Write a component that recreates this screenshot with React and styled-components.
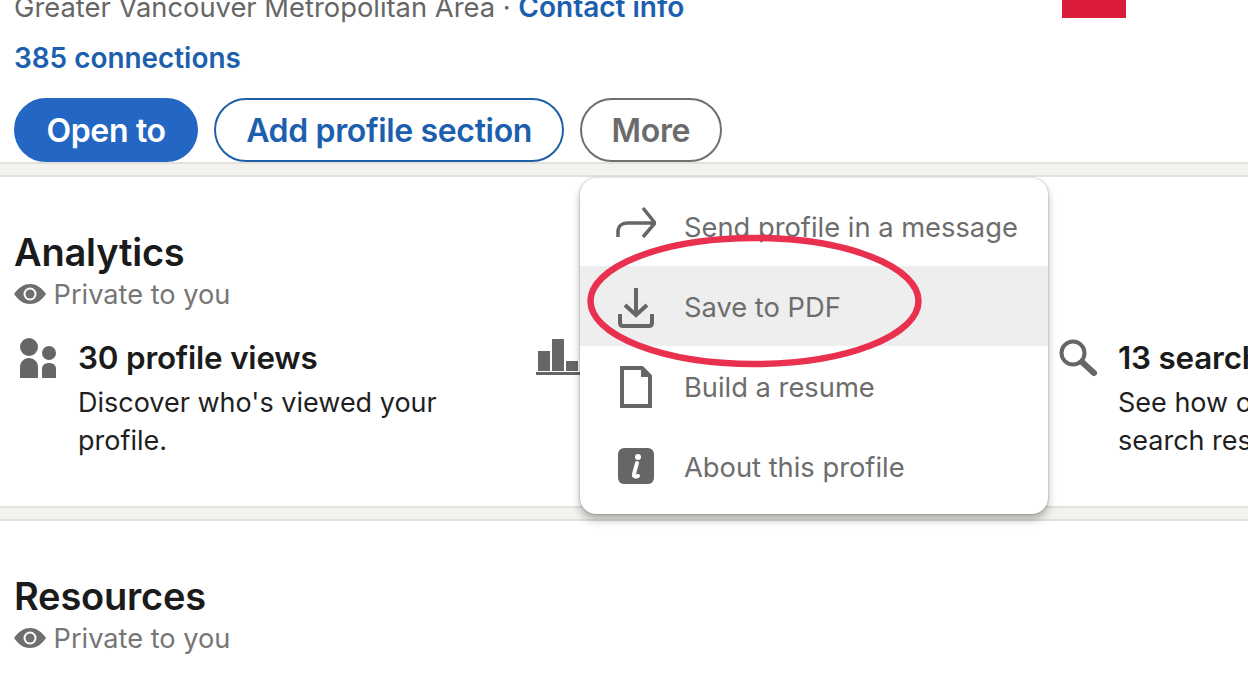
import React from 'react'
import styled, { createGlobalStyle } from 'styled-components'

const Global = createGlobalStyle`
  html, body { margin: 0; padding: 0; background: #fff; }
  * { box-sizing: border-box; }
`

const Page = styled.div`
  width: 1248px;
  height: 676px;
  overflow: hidden;
  background: #fff;
  font-family: Inter, "Liberation Sans", sans-serif;
  -webkit-font-smoothing: antialiased;
`

const Top = styled.header`
  padding: 0 14px;
  margin-top: -12px;
  position: relative;
`

const Flag = styled.div`
  position: absolute;
  top: 1px;
  left: 1062px;
  width: 64px;
  height: 29px;
  background: #dc1d3a;
`

const Location = styled.div`
  font-size: 27.35px;
  line-height: 38px;
  color: #666;
`

const BlueLink = styled.a`
  font-size: 28px;
  color: #1c5fae;
  font-weight: 600;
`

const Connections = styled(BlueLink)`
  display: block;
  margin-top: 12px;
  font-size: 27.9px;
  line-height: 38px;
`

const Actions = styled.div`
  display: flex;
  gap: 16px;
  margin-top: 21px;
`

const Pill = styled.button`
  height: 64px;
  padding: 2px ${p => p.$pad}px 0;
  border-radius: 32px;
  font: 600 32px/1 Inter, "Liberation Sans", sans-serif;
  letter-spacing: -0.35px;
  white-space: nowrap;
  background: ${p => (p.$kind === 'solid' ? '#2466c4' : '#fff')};
  color: ${p => (p.$kind === 'solid' ? '#fff' : p.$kind === 'blue' ? '#1c5fae' : '#6b6b6b')};
  border: 2px solid ${p => (p.$kind === 'solid' ? '#2466c4' : p.$kind === 'blue' ? '#1f5fa6' : '#6f6f6f')};
`

const MoreWrap = styled.div`
  position: relative;
`

const Band = styled.div`
  height: 15px;
  background: #f3f2ef;
  border-top: 2px solid #e2e1de;
  border-bottom: 2px solid #e2e1de;
`

const Section = styled.section`
  padding: ${p => p.$top}px 14px 0;
  height: ${p => p.$height}px;
`

const Heading = styled.h2`
  margin: 0;
  font-size: 38px;
  line-height: 44px;
  font-weight: 600;
  letter-spacing: -0.2px;
  color: #1b1b1b;
`

const Private = styled.div`
  display: flex;
  align-items: center;
  gap: 7.6px;
  height: 40px;
  font-size: 27.2px;
  color: #767676;
`

const Cards = styled.div`
  display: grid;
  grid-template-columns: repeat(3, 522px);
  margin-top: 24px;
`

const Card = styled.div`
  display: flex;
  align-items: flex-start;
`

const IconSlot = styled.div`
  flex: 0 0 ${p => p.$w}px;
  height: 44px;
  padding-left: ${p => p.$left}px;
  color: #666;
`

const CardText = styled.div`
  width: 400px;
  flex: none;
`

const CardTitle = styled.div`
  font-size: 31.4px;
  line-height: 40px;
  font-weight: 600;
  letter-spacing: -0.2px;
  color: #1b1b1b;
  white-space: nowrap;
`

const CardBody = styled.div`
  margin-top: 6px;
  font-size: 27px;
  line-height: 38px;
  color: #1f1f1f;
`

const Menu = styled.div`
  position: absolute;
  top: 80px;
  left: 0;
  z-index: 5;
  width: 468px;
  padding: 8px 0;
  background: #fff;
  border-radius: 16px;
  box-shadow: 0 0 2px rgba(0, 0, 0, 0.35), 0 6px 8px rgba(0, 0, 0, 0.28);
`

const MenuItem = styled.div`
  display: flex;
  align-items: center;
  gap: 28px;
  height: 80px;
  padding-left: 36px;
  font-size: 27.3px;
  color: #6d6d6d;
  white-space: nowrap;
  background: ${p => (p.$active ? '#eeeeee' : 'transparent')};
`

const MenuLabel = styled.span`
  padding-top: 2px;
`

const MenuIcon = styled.svg`
  width: 40px;
  height: 44px;
  flex: none;
  color: #666;
`

const Scribble = styled.svg`
  position: absolute;
  left: 6px;
  top: 56px;
  pointer-events: none;
`

const EyeIcon = () => (
  <svg width="32" height="20" viewBox="0 0 32 20">
    <path d="M0 10C5 3 10 0 16 0s11 3 16 10c-5 7-10 10-16 10S5 17 0 10z" fill="#6f6f6f" />
    <circle cx="16" cy="10" r="6.5" fill="#fff" />
    <circle cx="16" cy="10" r="4.5" fill="#6f6f6f" />
  </svg>
)

const PeopleIcon = () => (
  <svg width="38" height="42" viewBox="0 0 38 42" fill="currentColor">
    <circle cx="9" cy="9" r="9" />
    <circle cx="29" cy="15" r="7" />
    <path d="M0 40V29c0-5 4-9 9-9s9 4 9 9v11z" />
    <path d="M22 40V31c0-4 3-6 7-6s7 2 7 6v9z" />
  </svg>
)

const ChartIcon = () => (
  <svg width="44" height="44" viewBox="0 0 44 44" fill="currentColor">
    <rect x="2" y="13" width="12" height="20" />
    <rect x="16" y="1" width="12" height="32" />
    <rect x="30" y="23" width="12" height="10" />
    <rect x="0" y="34" width="44" height="3" />
  </svg>
)

const SearchIcon = () => (
  <svg width="40" height="40" viewBox="0 0 40 40" fill="none" stroke="currentColor">
    <circle cx="14" cy="15" r="11.5" strokeWidth="4" />
    <path d="M23 24l12 11" strokeWidth="6" strokeLinecap="round" />
  </svg>
)

const ShareIcon = () => (
  <MenuIcon viewBox="0 0 40 44" fill="none" stroke="currentColor" strokeWidth="3.5">
    <path d="M2 33v-5c0-6 4-9 9-9h27" />
    <path d="M27 4l12 15-12 14" />
  </MenuIcon>
)

const SaveIcon = () => (
  <MenuIcon viewBox="0 0 40 44" fill="none" stroke="currentColor" strokeWidth="4">
    <path d="M20 4v27" />
    <path d="M9 21l11 10 11-10" />
    <path d="M4 30v9c0 2 1 3 3 3h26c2 0 3-1 3-3v-9" />
  </MenuIcon>
)

const DocIcon = () => (
  <MenuIcon viewBox="0 0 40 44" fill="none" stroke="currentColor" strokeWidth="4">
    <path d="M6 4h20l8 8v30H6z" />
    <path d="M25 3h2l8 9v1h-10z" fill="currentColor" stroke="none" />
  </MenuIcon>
)

const InfoIcon = () => (
  <MenuIcon viewBox="0 0 40 44">
    <rect x="2" y="4" width="36" height="36" rx="6" fill="currentColor" />
    <circle cx="22" cy="13" r="3" fill="#fff" />
    <path d="M21 19l-3 11c-.5 2 1 3 4 2" fill="none" stroke="#fff" strokeWidth="4" strokeLinecap="round" />
  </MenuIcon>
)

const menuItems = [
  { label: 'Send profile in a message', Icon: ShareIcon },
  { label: 'Save to PDF', Icon: SaveIcon, active: true },
  { label: 'Build a resume', Icon: DocIcon },
  { label: 'About this profile', Icon: InfoIcon },
]

export default function App() {
  return (
    <Page>
      <Global />
      <Top>
        <Flag />
        <Location>
          Greater Vancouver Metropolitan Area · <BlueLink>Contact info</BlueLink>
        </Location>
        <Connections>385 connections</Connections>
        <Actions>
          <Pill $kind="solid" $pad={30.5}>Open to</Pill>
          <Pill $kind="blue" $pad={30}>Add profile section</Pill>
          <MoreWrap>
            <Pill $kind="grey" $pad={29.6}>More</Pill>
            <Menu>
              {menuItems.map(({ label, Icon, active }) => (
                <MenuItem key={label} $active={active}>
                  <Icon />
                  <MenuLabel>{label}</MenuLabel>
                </MenuItem>
              ))}
              <Scribble width="340" height="136" viewBox="0 0 340 136" fill="none">
                <ellipse cx="168.5" cy="67" rx="164" ry="63" stroke="#e9304e" strokeWidth="6.5" />
              </Scribble>
            </Menu>
          </MoreWrap>
        </Actions>
      </Top>
      <Band />
      <Section $top={53} $height={329}>
        <Heading>Analytics</Heading>
        <Private><EyeIcon /> Private to you</Private>
        <Cards>
          <Card>
            <IconSlot $w={64} $left={6}><PeopleIcon /></IconSlot>
            <CardText>
              <CardTitle>30 profile views</CardTitle>
              <CardBody>Discover who's viewed your profile.</CardBody>
            </CardText>
          </Card>
          <Card>
            <IconSlot $w={64} $left={0}><ChartIcon /></IconSlot>
          </Card>
          <Card>
            <IconSlot $w={60} $left={1}><SearchIcon /></IconSlot>
            <CardText>
              <CardTitle>13 search appearances</CardTitle>
              <CardBody>See how often you appear in search results.</CardBody>
            </CardText>
          </Card>
        </Cards>
      </Section>
      <Band />
      <Section $top={53} $height={160}>
        <Heading>Resources</Heading>
        <Private><EyeIcon /> Private to you</Private>
      </Section>
    </Page>
  )
}
